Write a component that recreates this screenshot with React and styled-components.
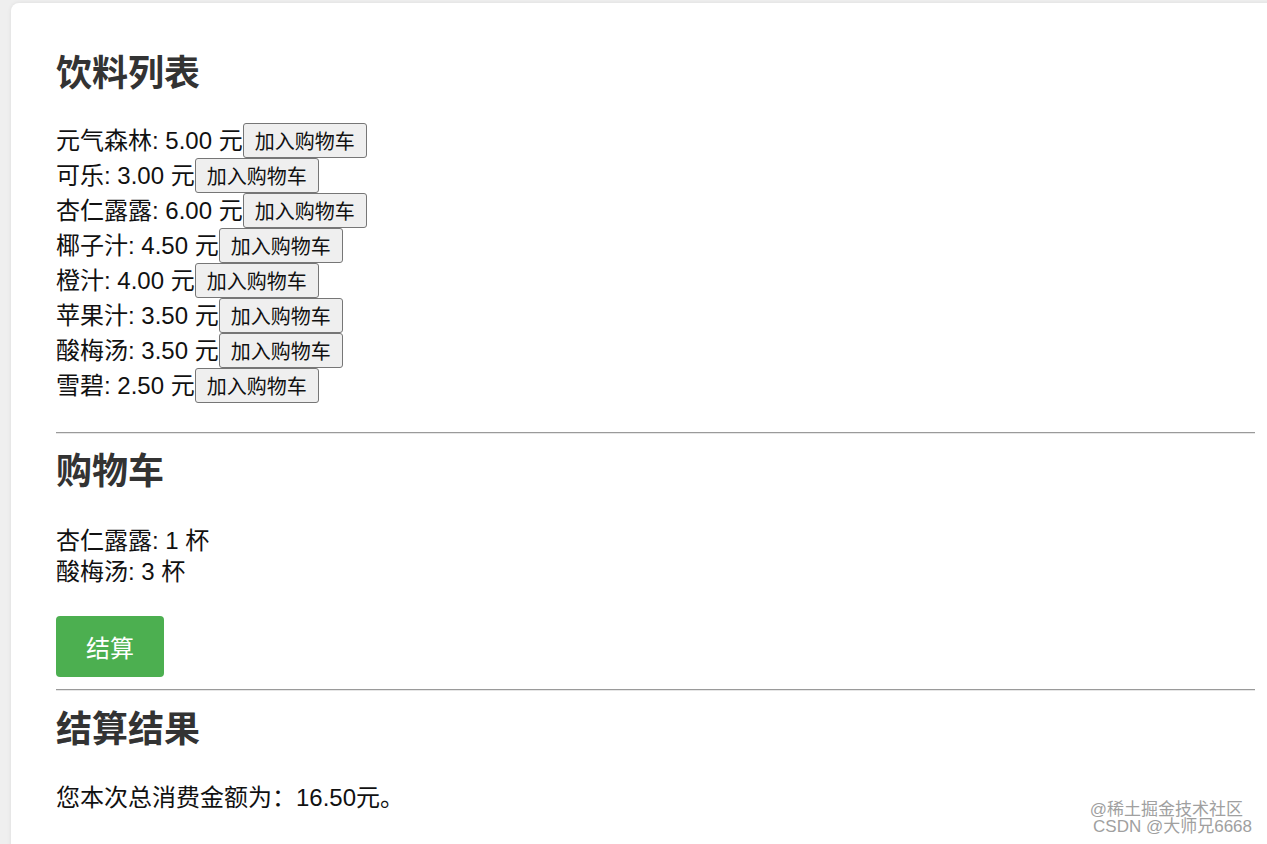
import React from "react";
import styled, { createGlobalStyle } from "styled-components";

const Global = createGlobalStyle`
  html, body { margin: 0; padding: 0; overflow: hidden; }
  body {
    background: #efefef;
    font-family: "Liberation Sans", "Noto Sans CJK SC", sans-serif;
    color: #111;
  }
`;

const Page = styled.div`
  position: relative;
  height: 844px;
  padding: 3px 0 0 11px;
  box-sizing: border-box;
`;

const Card = styled.main`
  width: 1289px;
  min-height: 860px;
  box-sizing: border-box;
  padding: 47px 45px 40px;
  background: #fff;
  border-radius: 8px;
  box-shadow: 0 0 4px rgba(0, 0, 0, 0.08);
`;

const Title = styled.h2`
  margin: 0 0 ${(p) => p.$gap}px;
  font-size: 36px;
  line-height: 48px;
  font-weight: 700;
  color: #333;
`;

const List = styled.div`
  display: flex;
  flex-direction: column;
`;

const Row = styled.div`
  display: flex;
  align-items: center;
  height: 35px;
  font-size: 24px;
  line-height: 32px;
`;

const AddButton = styled.button`
  height: 35px;
  padding: 0 11px;
  box-sizing: border-box;
  background: #efefef;
  border: 1px solid #767676;
  border-radius: 3px;
  font-family: "Liberation Sans", "Noto Sans CJK SC", sans-serif;
  font-size: 20px;
  color: #111;
`;

const Rule = styled.hr`
  margin: ${(p) => p.$top}px 0 ${(p) => p.$bottom}px;
  height: 0;
  border: none;
  border-top: 1px solid #9a9a9a;
  border-bottom: 1px solid #e6e6e6;
`;

const Line = styled.div`
  font-size: 24px;
  line-height: 31px;
`;

const CartLines = styled.div`
  margin-bottom: 29px;
`;

const CheckoutButton = styled.button`
  display: block;
  height: 61px;
  padding: 0 30px;
  background: #4caf50;
  border: none;
  border-radius: 4px;
  color: #fff;
  font-family: "Liberation Sans", "Noto Sans CJK SC", sans-serif;
  font-size: 24px;
`;

const Watermark = styled.div`
  position: absolute;
  right: 15px;
  bottom: 9px;
  display: flex;
  flex-direction: column;
  align-items: flex-end;
  font-family: "Liberation Sans", "Noto Sans CJK SC", sans-serif;
  font-size: 17px;
  line-height: 17px;
  color: #a0a0a0;
  text-shadow: 0 0 2px #fff, 0 0 1px #fff;
`;

const WatermarkLine = styled.span`
  margin-right: ${(p) => p.$shift}px;
`;

const drinks = [
  ["元气森林", "5.00"],
  ["可乐", "3.00"],
  ["杏仁露露", "6.00"],
  ["椰子汁", "4.50"],
  ["橙汁", "4.00"],
  ["苹果汁", "3.50"],
  ["酸梅汤", "3.50"],
  ["雪碧", "2.50"],
];

export default function App() {
  return (
    <Page>
      <Global />
      <Card>
        <Title $gap={25}>饮料列表</Title>
        <List>
          {drinks.map(([name, price]) => (
            <Row key={name}>
              <span>
                {name}: {price} 元
              </span>
              <AddButton>加入购物车</AddButton>
            </Row>
          ))}
        </List>
        <Rule $top={29} $bottom={14} />
        <Title $gap={29}>购物车</Title>
        <CartLines>
          <Line>杏仁露露: 1 杯</Line>
          <Line>酸梅汤: 3 杯</Line>
        </CartLines>
        <CheckoutButton>结算</CheckoutButton>
        <Rule $top={12} $bottom={15} />
        <Title $gap={28}>结算结果</Title>
        <Line>您本次总消费金额为：16.50元。</Line>
      </Card>
      <Watermark>
        <WatermarkLine $shift={9}>@稀土掘金技术社区</WatermarkLine>
        <WatermarkLine $shift={0}>CSDN @大师兄6668</WatermarkLine>
      </Watermark>
    </Page>
  );
}
